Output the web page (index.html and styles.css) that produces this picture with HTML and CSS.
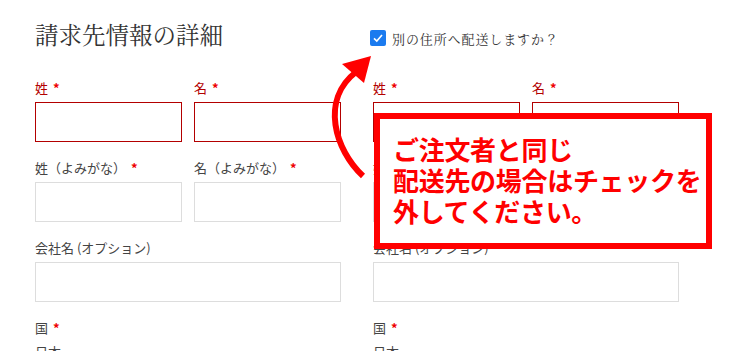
FILE: index.html
```html
<!DOCTYPE html>
<html lang="ja">
  <head>
    <meta charset="UTF-8" />
    <meta name="viewport" content="width=device-width, initial-scale=1.0" />
    <title>請求先情報の詳細</title>
    <link rel="stylesheet" href="styles.css">
  </head>
  <body>
    <div class="page">
      <div class="columns">
        <section class="col">
          <div class="col-head">
            <h3 class="title">請求先情報の詳細</h3>
          </div>
          <div class="row">
            <div class="field invalid">
              <label>姓 <span class="req">*</span></label>
              <div class="input"></div>
            </div>
            <div class="field invalid">
              <label>名 <span class="req">*</span></label>
              <div class="input"></div>
            </div>
          </div>
          <div class="row">
            <div class="field">
              <label>姓（よみがな） <span class="req">*</span></label>
              <div class="input"></div>
            </div>
            <div class="field">
              <label>名（よみがな） <span class="req">*</span></label>
              <div class="input"></div>
            </div>
          </div>
          <div class="field">
            <label>会社名 (オプション)</label>
            <div class="input"></div>
          </div>
          <div class="field">
            <label>国 <span class="req">*</span></label>
            <div class="country">日本</div>
          </div>
        </section>

        <section class="col">
          <div class="col-head">
            <label class="ship-check">
              <span class="box">
                <svg width="12" height="12" viewBox="0 0 12 12">
                  <path d="M2 6.3 L4.8 9 L10 3" fill="none" stroke="#fff" stroke-width="1.6" />
                </svg>
              </span>
              別の住所へ配送しますか？
            </label>
          </div>
          <div class="row">
            <div class="field invalid">
              <label>姓 <span class="req">*</span></label>
              <div class="input"></div>
            </div>
            <div class="field invalid">
              <label>名 <span class="req">*</span></label>
              <div class="input"></div>
            </div>
          </div>
          <div class="row">
            <div class="field">
              <label>姓（よみがな） <span class="req">*</span></label>
              <div class="input"></div>
            </div>
            <div class="field">
              <label>名（よみがな） <span class="req">*</span></label>
              <div class="input"></div>
            </div>
          </div>
          <div class="field">
            <label>会社名 (オプション)</label>
            <div class="input"></div>
          </div>
          <div class="field">
            <label>国 <span class="req">*</span></label>
            <div class="country">日本</div>
          </div>
        </section>
      </div>

      <!-- 注意書き -->
      <svg class="arrow" width="747" height="351" viewBox="0 0 747 351">
        <path d="M363 176 C335 150, 320 100, 356 72" fill="none" stroke="#f00" stroke-width="6" />
        <polygon points="371,56 342,64 364,83" fill="#f00" />
      </svg>
      <div class="callout">
        ご注文者と同じ<br />
        配送先の場合はチェックを<br />
        外してください。
      </div>
    </div>
  </body>
</html>
```

FILE: styles.css
```css
body {
  margin: 0;
  padding: 0;
  background: #fff;
  color: #444;
  font-family: 'Noto Sans CJK JP', 'Noto Sans', sans-serif;
}
.page {
  position: relative;
  width: 747px;
  height: 351px;
  overflow: hidden;
}
.columns {
  display: flex;
  gap: 32px;
  padding: 18px 0 0 35px;
}
.col {
  width: 306px;
}
.col-head {
  height: 32px;
  margin-bottom: 28px;
  display: flex;
  align-items: center;
}
.title {
  margin: 0;
  font-family: 'Noto Serif CJK JP', 'Liberation Serif', serif;
  font-weight: 400;
  font-size: 23.5px;
  line-height: 32px;
  color: #333;
}
.ship-check {
  display: flex;
  align-items: center;
  gap: 6px;
  margin: 8px 0 0 -3px;
  font-family: 'Noto Serif CJK JP', 'Liberation Serif', serif;
  font-size: 13px;
  letter-spacing: 0.9px;
  color: #333;
}
.box {
  width: 16px;
  height: 16px;
  background: #1b7bef;
  border-radius: 2px;
  display: flex;
  align-items: center;
  justify-content: center;
}
.row {
  display: flex;
  gap: 12px;
}
.row .field {
  width: 147px;
}
.field {
  margin-bottom: 16px;
}
.field label {
  display: block;
  font-size: 13px;
  line-height: 20px;
  margin-bottom: 4px;
  color: #444;
}
.req {
  color: #e00;
  font-weight: 700;
  margin-left: 2px;
}
.input {
  height: 40px;
  box-sizing: border-box;
  border: 1px solid #ddd;
  background: #fff;
}
.invalid label {
  color: #b30000;
}
.invalid .input {
  border-color: #b30000;
}
.country {
  font-size: 13px;
  line-height: 20px;
  color: #444;
}
.arrow {
  position: absolute;
  left: 0;
  top: 0;
}
.callout {
  position: absolute;
  left: 374px;
  top: 113px;
  width: 338px;
  height: 136px;
  box-sizing: border-box;
  border: 6px solid #f00;
  background: #fff;
  padding: 14px 0 14px 13px;
  white-space: nowrap;
  color: #f00;
  font-weight: 700;
  font-size: 26px;
  line-height: 31px;
  letter-spacing: -0.3px;
}
```
